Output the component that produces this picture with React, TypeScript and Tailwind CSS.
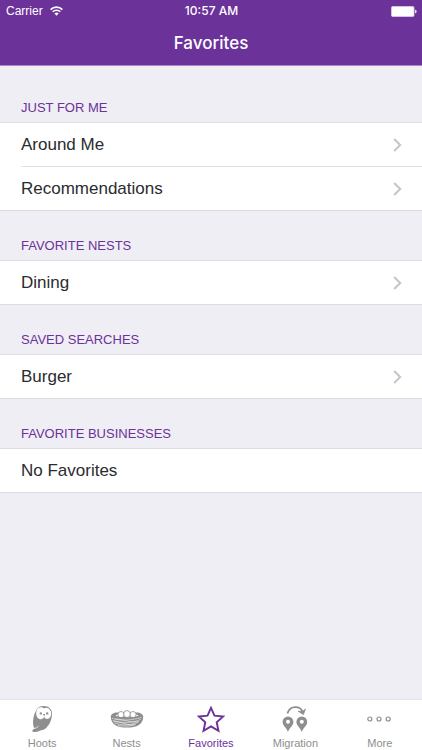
import React, { useState } from 'react';

type Row = { label: string; link: boolean };
type Section = { title: string; rows: Row[] };

const sections: Section[] = [
  {
    title: 'JUST FOR ME',
    rows: [
      { label: 'Around Me', link: true },
      { label: 'Recommendations', link: true },
    ],
  },
  { title: 'FAVORITE NESTS', rows: [{ label: 'Dining', link: true }] },
  { title: 'SAVED SEARCHES', rows: [{ label: 'Burger', link: true }] },
  { title: 'FAVORITE BUSINESSES', rows: [{ label: 'No Favorites', link: false }] },
];

const WifiIcon = () => (
  <svg className="h-[10px] w-[13px]" viewBox="0 0 13 10" fill="none" stroke="currentColor" aria-hidden="true">
    <path d="M.6 3.6a8.4 8.4 0 0 1 11.8 0" strokeWidth="1.7" />
    <path d="M2.7 5.8a5.4 5.4 0 0 1 7.6 0" strokeWidth="1.6" />
    <path d="M4.4 7.5a3 3 0 0 1 4.2 0L6.5 9.7z" fill="currentColor" stroke="none" />
  </svg>
);

const BatteryIcon = () => (
  <svg className="h-[11px] w-[26px]" viewBox="0 0 26 11" aria-hidden="true">
    <rect x="0.5" y="0.5" width="22.5" height="10" rx="1.2" fill="#fff" stroke="#dccbe9" strokeWidth="0.8" />
    <path d="M24 3.8h.4c.8 0 1.2.8 1.2 1.7s-.4 1.7-1.2 1.7H24z" fill="#e6daef" />
  </svg>
);

const ChevronIcon = () => (
  <svg className="h-[14px] w-[9px] text-[#c4c4c9]" viewBox="0 0 9 14" fill="none" stroke="currentColor" strokeWidth="2" aria-hidden="true">
    <path d="M1.2 1 7.2 7l-6 6" />
  </svg>
);

const OwlIcon = () => (
  <svg className="h-[28px] w-[34px] shrink-0" viewBox="0 0 34 28" aria-hidden="true">
    <path
      d="M10.6 6.6C12 2.8 15 1 18.800 1c5 0 8.200 3.200 8.200 7.600 0 5.800-2.200 11-5.800 14.400-1.800 1.600-4 2.200-6 2.600-1.400 1-3.400 1.600-5.800 1.400-1.600 0-2.600-.6-2.200-1.200l2-2.600C7.400 19.600 7.600 12.600 10.600 6.600z"
      fill="currentColor"
    />
    <path
      d="M19 3.600c-1.800-2-5.800-1.600-7.200 1.400-1.500 3.600-.2 8.400 3.200 9.200 1.700.4 3.300-.7 4.200-2.200.9 1.500 2.300 2.300 3.900 1.800 3-.9 3.700-5 2.500-7.800-1.200-3-4.800-4.200-6.600-2.400z"
      fill="#fff"
    />
    <circle cx="15.8" cy="8.4" r="1.2" fill="currentColor" />
    <circle cx="22.2" cy="8.4" r="1.2" fill="currentColor" />
    <path d="M18 9h2.200l-1.100 2.600z" fill="currentColor" />
    <path d="M8.400 23.600c2.200-.2 4-1.200 5.200-2.600" fill="none" stroke="#fff" strokeWidth="0.8" />
  </svg>
);

const NestIcon = () => (
  <svg className="h-[28px] w-[34px] shrink-0" viewBox="0 0 34 28" aria-hidden="true">
    <path
      d="M.8 11.4C.8 8.9 5.2 6.8 8 7.6h18c2.8-.8 7.2 1.3 7.2 3.8 0 7.7-6.2 11.2-16.2 11.2S.8 19.1.8 11.4z"
      fill="currentColor"
    />
    <path d="M5.4 10.6c4-2.4 19.2-2.4 23.2 0-3.2 2.2-20 2.2-23.2 0z" fill="#fff" />
    <g fill="#fff" stroke="currentColor" strokeWidth="0.8">
      <circle cx="11" cy="9.6" r="3.1" />
      <circle cx="23" cy="9.6" r="3.1" />
      <ellipse cx="17" cy="9" rx="3.3" ry="3.5" />
    </g>
    <path d="M4 10.8c5 2.3 21 2.3 26 0v3.4H4z" fill="currentColor" />
    <g fill="none" stroke="#fff" strokeWidth="0.5">
      <path d="M2 13c6 3.4 22 2.2 29.6-.8M2.7 15.2c8 3.7 21 2.7 28.2-1M4.4 17.7c7 3.2 16.5 2.9 24.6-1.2M7.8 20.2c6 1.5 13 1.2 18.2-1.2M5 13.8c8 .2 14 3.8 23 3.2M3.6 16.4c8 0 13 4.3 21 3.7" />
    </g>
  </svg>
);

const StarIcon = () => (
  <svg className="h-[28px] w-[34px] shrink-0" viewBox="0 0 34 28" fill="none" stroke="currentColor" strokeWidth="1.9" aria-hidden="true">
    <path d="m17 2.800 3.500 7.800 8.600.9-6.400 5.800 1.800 8.500-7.500-4.400-7.500 4.400 1.800-8.500-6.400-5.800 8.600-.9z" />
  </svg>
);

const MigrationIcon = () => (
  <svg className="h-[28px] w-[34px] shrink-0" viewBox="0 0 34 28" aria-hidden="true">
    <path d="M9.4 8.6c1.2-4 4.4-6.4 7.800-6.400 3.700 0 6.600 2 7.500 5" fill="none" stroke="currentColor" strokeWidth="1.8" />
    <path d="m20 6.200 5.400 3.400L27.400 4l-2.800 2.600z" fill="currentColor" stroke="currentColor" strokeWidth="0.8" />
    <path
      fillRule="evenodd"
      fill="currentColor"
      d="M10 11.5a5.400 5.400 0 0 1 5.400 5.400c0 3.600-3.900 5.500-5.400 10.100-1.500-4.600-5.400-6.500-5.400-10.100a5.400 5.400 0 0 1 5.400-5.400zm0 3.300a2 2 0 1 0 0 4 2 2 0 0 0 0-4zM23.800 11.500a5.400 5.400 0 0 1 5.400 5.400c0 3.600-3.900 5.500-5.400 10.100-1.500-4.600-5.400-6.500-5.400-10.100a5.400 5.400 0 0 1 5.400-5.400zm0 3.300a2 2 0 1 0 0 4 2 2 0 0 0 0-4z"
    />
  </svg>
);

const MoreIcon = () => (
  <svg className="h-[28px] w-[34px] shrink-0" viewBox="0 0 34 28" fill="none" stroke="currentColor" strokeWidth="1.2" aria-hidden="true">
    <circle cx="6.8" cy="14" r="2" />
    <circle cx="16" cy="14" r="2" />
    <circle cx="25.2" cy="14" r="2" />
  </svg>
);

const tabs = [
  { name: 'Hoots', Icon: OwlIcon },
  { name: 'Nests', Icon: NestIcon },
  { name: 'Favorites', Icon: StarIcon },
  { name: 'Migration', Icon: MigrationIcon },
  { name: 'More', Icon: MoreIcon },
];

const App: React.FC = () => {
  const [activeTab, setActiveTab] = useState('Favorites');

  return (
    <div className="flex min-h-screen flex-col bg-[#efeef4] font-['Liberation_Sans',Arial,sans-serif]">
      <header className="border-b border-[#a98bc4] bg-[#6b3299] text-white">
        <div className="grid h-[22px] grid-cols-3 items-center pr-[5px] pl-[6px] text-[12px]">
          <div className="flex items-center gap-[7px]">
            <span>Carrier</span>
            <WifiIcon />
          </div>
          <time className="text-center font-['Inter',sans-serif] text-[12px] font-medium">10:57 AM</time>
          <div className="flex justify-end">
            <BatteryIcon />
          </div>
        </div>
        <h1 className="text-center font-['Inter',sans-serif] text-[17px] leading-[43px] font-medium">Favorites</h1>
      </header>

      <main className="flex-1 pt-[7px]">
        {sections.map((section) => (
          <section key={section.title}>
            <h2 className="pt-[26px] pb-[6px] pl-[21px] text-[13px] leading-[17px] text-[#6b3299]">{section.title}</h2>
            <ul className="border-y border-[#dddce2] bg-white text-[17px] text-[#2b2b2f]">
              {section.rows.map((row, index) => (
                <li key={row.label} className="pl-[21px]">
                  <div className={index > 0 ? 'border-t border-[#e2e1e6]' : ''}>
                    {row.link ? (
                      <a href="#" className="flex h-[43px] items-center justify-between pr-5">
                        {row.label}
                        <ChevronIcon />
                      </a>
                    ) : (
                      <p className="flex h-[43px] items-center">{row.label}</p>
                    )}
                  </div>
                </li>
              ))}
            </ul>
          </section>
        ))}
      </main>

      <nav className="grid grid-cols-5 border-t border-[#e4e3e9] bg-white">
        {tabs.map(({ name, Icon }) => (
          <button
            key={name}
            type="button"
            onClick={() => setActiveTab(name)}
            className={`flex h-[50px] flex-col items-center gap-[3px] pt-[5px] text-[11px] leading-[14px] ${
              activeTab === name ? 'text-[#6b3299]' : 'text-[#8e8e8e]'
            }`}
          >
            <Icon />
            {name}
          </button>
        ))}
      </nav>
    </div>
  );
};

export default App;
